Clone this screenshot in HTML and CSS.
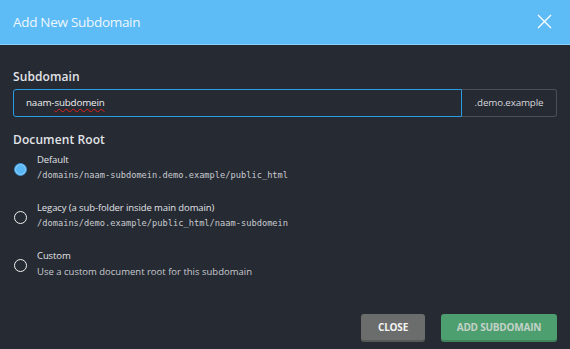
FILE: index.html
```html
<!DOCTYPE html>
<html>
<head>
<meta charset="utf-8">
<title>Add New Subdomain</title>
<link rel="stylesheet" href="styles.css">
</head>
<body>
<div class="modal">
  <div class="modal-header">
    <span class="modal-title">Add New Subdomain</span>
    <svg class="close-x" width="15" height="15" viewBox="0 0 15 15">
      <path d="M1 1 L14 14 M14 1 L1 14" stroke="#fff" stroke-width="1.3" fill="none"/>
    </svg>
  </div>
  <div class="modal-body">
    <div class="label">Subdomain</div>
    <div class="input-group">
      <div class="input">naam-<span class="misspelled">subdomein</span></div>
      <div class="suffix">.demo.example</div>
    </div>
    <div class="label label-root">Document Root</div>
    <div class="option">
      <span class="radio checked"></span>
      <div class="option-text">
        <div class="option-title">Default</div>
        <div class="option-path">/domains/naam-subdomein.demo.example/public_html</div>
      </div>
    </div>
    <div class="option">
      <span class="radio"></span>
      <div class="option-text">
        <div class="option-title">Legacy (a sub-folder inside main domain)</div>
        <div class="option-path">/domains/demo.example/public_html/naam-subdomein</div>
      </div>
    </div>
    <div class="option">
      <span class="radio"></span>
      <div class="option-text">
        <div class="option-title">Custom</div>
        <div class="option-desc">Use a custom document root for this subdomain</div>
      </div>
    </div>
  </div>
  <div class="modal-footer">
    <span class="btn btn-close">CLOSE</span>
    <span class="btn btn-add">ADD SUBDOMAIN</span>
  </div>
</div>
</body>
</html>
```

FILE: styles.css
```css
* { box-sizing: border-box; }
html, body { margin: 0; padding: 0; background: #262a33; }
body { font-family: "Open Sans", "Noto Sans", sans-serif; color: #e4e6ea; }

.modal { width: 570px; height: 349px; display: flex; flex-direction: column; background: #262a33; }

.modal-header {
  height: 45px; background: #5dbbf5; border-bottom: 1px solid #8ccff8;
  display: flex; align-items: center; justify-content: space-between;
  padding: 0 18px 0 13px;
}
.modal-title { font-size: 13.5px; color: #eef7fe; letter-spacing: -0.3px; }
.close-x { display: block; margin-top: -1px; }

.modal-body { padding: 24px 13px 0 13px; flex: 1; }

.label { font-size: 12px; font-weight: 600; line-height: 16px; color: #e2e4e8; letter-spacing: 0.1px; }
.label-root { margin-top: 15px; }

.input-group { display: flex; height: 28px; margin-top: 4px; width: 544px; }
.input {
  flex: 1; border: 1px solid #2a9be4; border-radius: 3px 0 0 3px;
  font-size: 9.8px; line-height: 26px; padding-left: 12px; color: #f0f0f2; letter-spacing: -0.15px;
}
.misspelled { text-decoration: underline wavy #e0201e; text-decoration-thickness: 1px; text-underline-offset: 2px; }
.suffix {
  width: 95px; border: 1px solid #4b4f58; border-left: none; border-radius: 0 3px 3px 0;
  font-size: 9.8px; line-height: 26px; text-align: center; color: #d6d8dc; letter-spacing: -0.15px;
}

.option { display: flex; align-items: center; margin-top: 6px; height: 30px; }
.option + .option { margin-top: 18px; }
.radio {
  width: 13px; height: 13px; border-radius: 50%; border: 1.5px solid #f2f2f2;
  margin-left: 1px; margin-right: 10px; flex: none;
}
.radio.checked { background: #5ab8f6; border: 1.5px solid #3f93d6; box-shadow: 0 0 0 1px #8fd0fa inset; }
.option-text { margin-top: -1px; }
.option-title { font-size: 9.5px; line-height: 14px; color: #e0e2e6; letter-spacing: -0.1px; }
.option-path { font-family: "DejaVu Sans Mono", monospace; font-size: 8.7px; line-height: 17px; color: #c8cacf; }
.option-desc { font-size: 9.5px; line-height: 17px; color: #c8cacf; }

.modal-footer { display: flex; justify-content: flex-end; gap: 16px; padding: 0 13px 7px 0; }
.btn {
  height: 28px; border-radius: 3px; font-size: 10px; font-weight: 700; line-height: 27px;
  text-align: center; box-shadow: 0 -2px 0 rgba(0,0,0,0.18) inset; letter-spacing: -0.2px;
}
.btn-close { width: 64px; background: #6b6d6c; color: #f4f4f4; }
.btn-add { width: 116px; background: #4e9f6f; color: #c3d2c8; }
```
